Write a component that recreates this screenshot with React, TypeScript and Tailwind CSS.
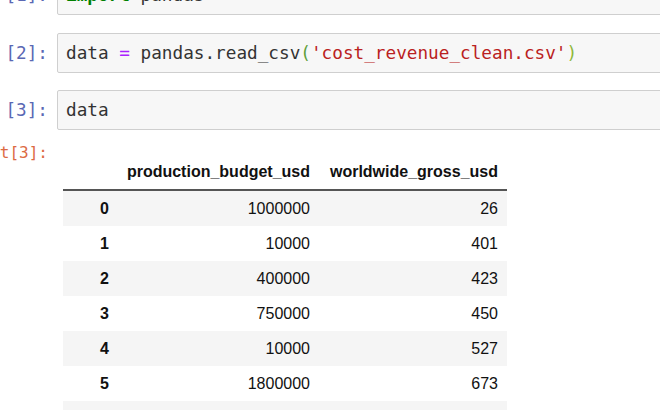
const rows = [
  [0, "1000000", "26"],
  [1, "10000", "401"],
  [2, "400000", "423"],
  [3, "750000", "450"],
  [4, "10000", "527"],
  [5, "1800000", "673"],
  [6, "", ""],
];

const mono = "font-['DejaVu_Sans_Mono','Liberation_Mono',monospace]";

function Prompt({ children, out }: { children: React.ReactNode; out?: boolean }) {
  return (
    <div
      className={`flex w-[57px] shrink-0 justify-end pr-[9px] whitespace-nowrap ${mono} ${
        out ? "text-[16px] text-[#dc6a43]" : "text-[17.7px] text-[#5a68b4]"
      }`}
    >
      {children}
    </div>
  );
}

function Cell({ n, children, className = "" }: { n: number; children: React.ReactNode; className?: string }) {
  return (
    <div className={`flex items-center ${className}`}>
      <Prompt>[{n}]:</Prompt>
      <div
        className={`flex h-[40px] flex-1 items-center rounded-[2px] border border-[#cfcfcf] bg-[#f7f7f7] pl-[8px] text-[17.7px] text-[#333] whitespace-nowrap ${mono}`}
      >
        {children}
      </div>
    </div>
  );
}

export default function App() {
  return (
    <div className="h-[410px] w-[660px] overflow-hidden bg-white">
      <div className="-mr-[10px] flex flex-col">
        <Cell n={1} className="-mt-[25px]">
          <span className="font-bold text-[#008000]">import</span>
          <span>&nbsp;pandas</span>
        </Cell>
        <Cell n={2} className="mt-[18px]">
          <span>data&nbsp;</span>
          <span className="text-[#aa22ff]">=</span>
          <span>&nbsp;pandas.read_csv</span>
          <span className="text-[#5f9f3a]">(</span>
          <span className="text-[#ba2121]">'cost_revenue_clean.csv'</span>
          <span className="text-[#8fb83a]">)</span>
        </Cell>
        <Cell n={3} className="mt-[17px]">
          <span>data</span>
        </Cell>

        <div className="mt-[11px] flex">
          <Prompt out>
            <span className="shrink-0">Out[3]:</span>
          </Prompt>
          <div className="ml-[6px] mt-[13px] w-[444px] font-['Liberation_Sans',Arial,sans-serif] text-[16px] text-[#111]">
            <div className="grid h-[37px] grid-cols-[55px_200px_189px] items-center border-b-2 border-[#555]">
              <div />
              <div className="pr-[8px] text-right font-bold">production_budget_usd</div>
              <div className="pr-[9px] text-right font-bold">worldwide_gross_usd</div>
            </div>
            {rows.map(([i, a, b]) => (
              <div
                key={i}
                className={`grid h-[35px] grid-cols-[55px_200px_189px] items-center ${
                  Number(i) % 2 === 0 ? "bg-[#f5f5f5]" : "bg-white"
                }`}
              >
                <div className="pl-[37px] font-bold">{a === "" ? "" : i}</div>
                <div className="pr-[8px] text-right">{a}</div>
                <div className="pr-[9px] text-right">{b}</div>
              </div>
            ))}
          </div>
        </div>
      </div>
    </div>
  );
}
